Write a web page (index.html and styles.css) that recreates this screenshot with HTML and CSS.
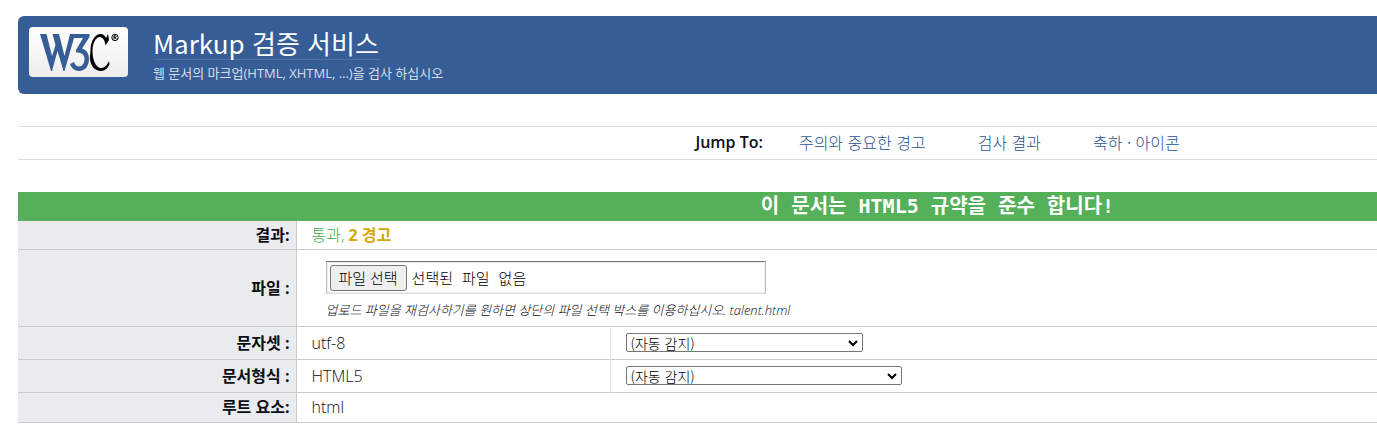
FILE: index.html
```html
<!DOCTYPE html>
<html lang="ko">
<head>
<meta charset="utf-8">
<title>Markup 검증 서비스</title>
<link rel="stylesheet" href="styles.css">
</head>
<body>
<header class="banner">
  <a class="logo" href="#" aria-label="W3C">
    <svg class="logo-mark" viewBox="0 0 80 40" aria-hidden="true">
      <path fill="#375d96" d="M1 2H7.500L13 24L16.500 13L13.500 2H20L25.500 24L31 2H50.500V5L43 16.500C48 18 50 22 50 27C50 34 46 39 40 39C35.500 39 32.500 36 31 32L35 30C36 33 38 34.500 40 34.500C43.500 34.500 45.500 31 45.500 27C45.500 22 42 20.500 37 20.500V18L44 6H35L25.500 39H24.500L18.500 19L13 39H12Z"/>
      <path d="M69 2L70 8L66.500 13.500C66 9 64 5 61 5C56.500 5 53.500 12 53.500 19C53.500 29 57.500 36 62 36C66 36 68 33 70 29L70.500 32C69 36 66 39 62 39C56 39 51.500 34 51 27C50.500 24 51.500 22 51.500 18C51.500 9 56 2 61.500 2C64.500 2 66 4 67 6Z"/>
      <circle cx="76" cy="5.500" r="3.200" fill="none" stroke="#000"/>
      <path fill="none" stroke="#000" d="M75 7.500V3.800H76.500Q78 4.800 76.500 5.600H75M76.300 5.600L77.500 7.500"/>
    </svg>
  </a>
  <div class="titles">
    <h1 class="title"><a href="#">Markup 검증 서비스</a></h1>
    <p class="tagline">웹 문서의 마크업(HTML, XHTML, …)을 검사 하십시오</p>
  </div>
</header>
<nav class="jumpbar">
  <strong>Jump To:</strong>
  <a href="#warnings">주의와 중요한 경고</a>
  <a href="#result">검사 결과</a>
  <a href="#icons">축하 · 아이콘</a>
</nav>
<main>
  <h2 class="verdict" id="result">이 문서는 HTML5 규약을 준수 합니다!</h2>
  <form>
  <table class="report">
    <colgroup><col class="col-label"><col class="col-value"><col></colgroup>
    <tbody>
    <tr class="short">
      <th scope="row">결과:</th>
      <td colspan="2" class="passed">통과, <strong>2 경고</strong></td>
    </tr>
    <tr>
      <th scope="row"><label for="file">파일 :</label></th>
      <td colspan="2" class="file-cell">
        <div class="file-box">
          <input type="file" id="file" class="file-input">
          <span class="file-button">파일 선택</span>
          <span class="file-name">선택된 파일 없음</span>
        </div>
        <p class="hint">업로드 파일을 재검사하기를 원하면 상단의 파일 선택 박스를 이용하십시오. talent.html</p>
      </td>
    </tr>
    <tr class="option">
      <th scope="row"><label for="charset">문자셋 :</label></th>
      <td>utf-8</td>
      <td class="choice"><select id="charset" class="charset"><option>(자동 감지)</option></select></td>
    </tr>
    <tr class="option">
      <th scope="row"><label for="doctype">문서형식 :</label></th>
      <td>HTML5</td>
      <td class="choice"><select id="doctype" class="doctype"><option>(자동 감지)</option></select></td>
    </tr>
    <tr class="root">
      <th scope="row">루트 요소:</th>
      <td colspan="2">html</td>
    </tr>
    </tbody>
  </table>
  </form>
</main>
</body>
</html>
```
FILE: styles.css
```css
* { box-sizing: border-box; }
body {
  margin: 16px 0 0 18px;
  background: #fff;
  color: #0c0e14;
  font: 300 16px/24px "Open Sans", "Noto Sans CJK KR", sans-serif;
}
h1, h2, p { margin: 0; font-weight: 300; }
a { color: #2a5290; text-decoration: none; }
.banner {
  display: flex;
  align-items: flex-start;
  gap: 25px;
  padding: 11px 11px 8px;
  background: #365d95;
  border-radius: 6px 0 0 6px;
}
.logo {
  display: flex;
  justify-content: center;
  align-items: center;
  width: 99px;
  height: 50px;
  border-radius: 4px;
  background: linear-gradient(#fff, #ededed);
}
.logo-mark { width: 80px; height: 40px; }
.title { font-size: 26px; font-weight: 400; line-height: 32px; }
.title a {
  display: inline-block;
  color: #fff;
  border-bottom: 1px solid #4a73a5;
  font-family: "Noto Sans CJK KR", sans-serif;
}
.tagline {
  color: #d5dfed;
  font-size: 13px;
  font-weight: 400;
  line-height: 26px;
}
.jumpbar {
  display: flex;
  justify-content: center;
  gap: 52px;
  margin: 32px 0;
  padding: 3px 0 5px 480px;
  border: solid #ddd;
  border-width: 1px 0;
  font-family: "Noto Sans CJK KR", sans-serif;
}
.jumpbar strong { margin-right: -16px; font-family: "Open Sans", sans-serif; font-weight: 600; }
.verdict {
  padding-left: 480px;
  background: #55b05a;
  color: #fff;
  font: bold 20px/29px "DejaVu Sans Mono", "Noto Sans CJK KR", monospace;
  text-align: center;
}
.report { width: 100%; table-layout: fixed; border-collapse: collapse; }
.col-label { width: 278px; }
.col-value { width: 314px; }
.report tr { border-bottom: 1px solid #ccc; }
.report th {
  padding: 0 6px;
  border-right: 1px solid #ccc;
  background: #eaebee;
  text-align: right;
  font-weight: 700;
}
.report td { padding: 0 15px; }
.short { height: 28px; }
.root { height: 30px; }
.option { height: 33px; }
.report .choice { border-left: 1px solid #e5e5e5; }
.report .passed { color: #45a84b; }
.passed strong { color: #d4a90a; font-weight: 700; }
.report .file-cell { padding: 11px 29px 4px; }
.file-box {
  position: relative;
  display: flex;
  align-items: baseline;
  gap: 5px;
  width: 440px;
  height: 33px;
  padding: 3px;
  border: 1px solid;
  border-color: #777 #bbb #ddd #bbb;
  box-shadow: inset 0 0 1px 1px #eee;
  color: #000;
  font-size: 15px;
}
.file-input { position: absolute; inset: 0; width: 100%; opacity: 0; }
.file-button {
  padding: 0 8px;
  border: 1px solid #767676;
  border-radius: 3px;
  background: #efefef;
  line-height: 24px;
}
.file-name { font-family: "Liberation Mono", "Noto Sans CJK KR", monospace; }
.hint { padding-top: 4px; font-size: 13px; font-style: italic; font-weight: 300; }
select {
  appearance: none;
  display: block;
  height: 19px;
  padding: 0 4px;
  border: 1px solid #767676;
  border-radius: 2px;
  background: #fff url("data:image/svg+xml,%3Csvg xmlns='http://www.w3.org/2000/svg' width='10' height='8'%3E%3Cpath d='M1 2l4 4 4-4' fill='none' stroke='%23000' stroke-width='2'/%3E%3C/svg%3E") no-repeat right 4px center;
  color: #000;
  font: 300 14px/16px "Noto Sans CJK KR", sans-serif;
}
.charset { width: 237px; }
.doctype { width: 276px; }
```
